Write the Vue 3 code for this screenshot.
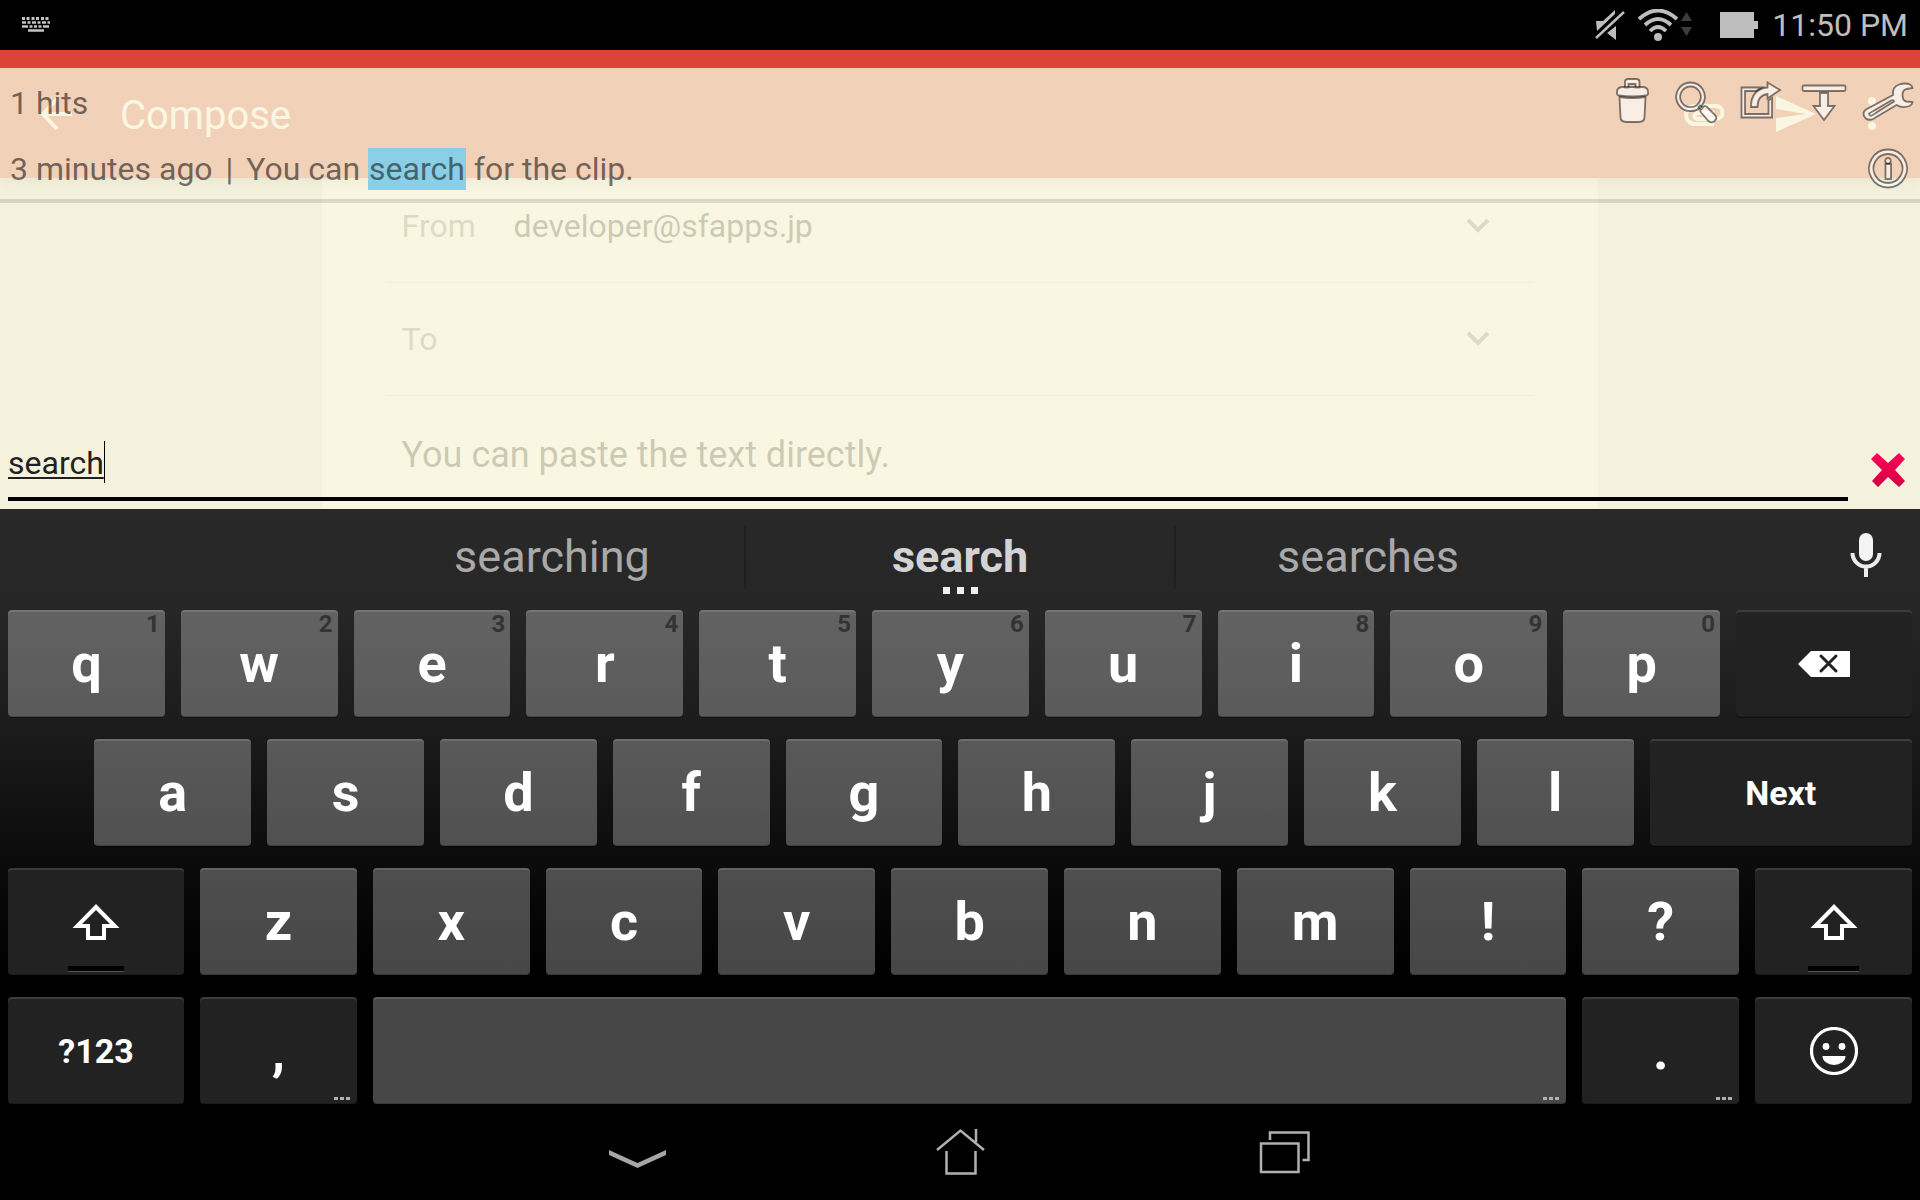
<template>
  <div class="device">
    <header class="status-bar">
      <svg class="status-keyboard" width="30" height="16" viewBox="0 0 30 16" aria-hidden="true">
        <g fill="none" stroke="#c4c4c4">
          <path d="M1 1.5h28" stroke-width="3" stroke-dasharray="3 1.5 3 2" />
          <path d="M1 5.5h28" stroke-width="2.5" stroke-dasharray="4 1.5 3 1.5" />
          <path d="M1 9.5h28" stroke-width="2.5" stroke-dasharray="6 1.5 3 1.5 3 1.5 3 1.5" />
          <path d="M7 13.5h16" stroke-width="2.5" />
        </g>
      </svg>
      <div class="status-icons">
        <svg width="32" height="32" viewBox="0 0 32 32" aria-hidden="true">
          <path d="M2 12h7l12-11v4L3 22z M22 17v14l-9-7z" fill="#bebebe" />
          <path d="M2 29 30 3" stroke="#bebebe" stroke-width="2.5" />
        </svg>
        <svg class="wifi" width="56" height="32" viewBox="0 0 56 32" aria-hidden="true">
          <g fill="none" stroke="#bebebe" stroke-width="3.8">
            <path d="M1 10Q20-7 39 10" />
            <path d="M7 16Q20 4 33 16" />
            <path d="M12 22Q20 14 28 22" />
          </g>
          <circle cx="20" cy="28" r="4" fill="#bebebe" />
          <path d="M43 12h11l-5.5-9z M43 18h11l-5.5 9z" fill="#3d3d3d" />
        </svg>
        <svg class="battery" width="38" height="26" viewBox="0 0 38 26" aria-hidden="true">
          <path d="M0 0h34v9h4v8h-4v9H0z" fill="#bebebe" />
        </svg>
        <time class="clock">11:50 PM</time>
      </div>
    </header>

    <main class="stage">
      <!-- mail app lying underneath the clip panel -->
      <section class="mail">
        <div class="mail-bar">
          <button class="icon-btn" aria-label="Back">
            <svg width="48" height="48" viewBox="0 0 48 48">
              <path d="M40 24H11M25 9 11 24l14 15" fill="none" stroke="#fff" stroke-width="4" />
            </svg>
          </button>
          <h1 class="mail-title">Compose</h1>
          <div class="mail-actions">
            <button class="icon-btn" aria-label="Attach">
              <svg width="48" height="48" viewBox="0 0 48 48">
                <path d="M34 34H15a9 9 0 0 1 0-18h21a6 6 0 0 1 0 13H17.5a3 3 0 0 1 0-6H34" fill="none" stroke="#fff" stroke-width="4" />
              </svg>
            </button>
            <button class="icon-btn" aria-label="Send">
              <svg width="48" height="48" viewBox="0 0 48 48">
                <path d="M4 6v13l30 5-30 4v14l40-18z" fill="#fff" />
              </svg>
            </button>
            <button class="icon-btn" aria-label="More">
              <svg width="16" height="48" viewBox="0 0 16 48">
                <g fill="#fff">
                  <circle cx="8" cy="11" r="4" />
                  <circle cx="8" cy="24" r="4" />
                  <circle cx="8" cy="36" r="4" />
                </g>
              </svg>
            </button>
          </div>
        </div>
        <div class="sheet">
          <div class="field">
            <span id="from-label" class="field-label">From</span>
            <button class="account" aria-labelledby="from-label">
              developer@sfapps.jp
              <svg width="24" height="16" viewBox="0 0 24 16"><path d="M2 2l10 10L22 2" fill="none" stroke="#757575" stroke-width="4" /></svg>
            </button>
          </div>
          <div class="field">
            <label class="field-label" for="to">To</label>
            <input id="to" class="to-input" type="text" />
            <button class="icon-btn" aria-label="Add Cc/Bcc">
              <svg width="24" height="16" viewBox="0 0 24 16"><path d="M2 2l10 10L22 2" fill="none" stroke="#757575" stroke-width="4" /></svg>
            </button>
          </div>
          <textarea v-model="body" class="body-input" rows="1" aria-label="Compose email"></textarea>
        </div>
      </section>

      <!-- translucent clip history panel -->
      <section class="panel">
        <div class="panel-head">
          <p class="hits">{{ clips.length }} hits</p>
          <div class="tools">
            <button v-for="tool in tools" :key="tool.name" class="icon-btn" :aria-label="tool.name">
              <svg class="tool-icon" width="64" height="64" viewBox="0 0 64 64">
                <path v-for="d in tool.paths" :key="d" :d="d" />
              </svg>
            </button>
          </div>
        </div>
        <div v-for="clip in clips" :key="clip.before" class="clip">
          <p class="clip-text">{{ clip.time }}<span class="bar"> | </span>{{ clip.before }}<mark>{{ clip.match }}</mark>{{ clip.after }}</p>
          <button class="icon-btn" aria-label="Clip info">
            <svg class="tool-icon" width="64" height="60" viewBox="0 0 64 60">
              <path d="M32 10.5a19 19 0 1 0 .01 0z M32 15a14.5 14.5 0 1 1-.01 0z" />
              <path d="M32 19a2.8 2.8 0 1 0 .01 0z" />
              <path d="M29.5 25h5.5v15h-5.5z" />
            </svg>
          </button>
        </div>
        <div class="search-row">
          <div class="search-box">
            <input v-model="query" class="search-input" type="text" aria-label="Search clips" />
            <span class="caret"></span>
          </div>
          <button class="icon-btn clear" aria-label="Clear search" @click="query = ''">
            <svg width="36" height="36" viewBox="0 0 36 36">
              <defs>
                <linearGradient id="clear-fill" x1="0" y1="0" x2="0" y2="1">
                  <stop offset="0" stop-color="#ff0059" />
                  <stop offset="1" stop-color="#cf0044" />
                </linearGradient>
              </defs>
              <path d="M7 1l11 10L29 1l6 6-10 11 10 11-6 6-11-10L8 35l-6-6 10-11L1 7z" fill="url(#clear-fill)" />
            </svg>
          </button>
        </div>
      </section>
    </main>

    <section class="keyboard">
      <div class="suggestions">
        <button class="suggestion" @click="query = 'searching'">searching</button>
        <button class="suggestion main" @click="query = 'search'">
          search
          <span class="more-dots"><i></i><i></i><i></i></span>
        </button>
        <button class="suggestion" @click="query = 'searches'">searches</button>
        <button class="icon-btn mic" aria-label="Voice input">
          <svg width="32" height="50" viewBox="0 0 32 50">
            <rect x="9" y="1" width="14" height="28" rx="7" fill="#f4f4f4" />
            <path d="M2.5 21a13.5 13.5 0 0 0 27 0M16 35v10" fill="none" stroke="#ececec" stroke-width="4" />
          </svg>
        </button>
      </div>

      <div v-for="(row, index) in rows" :key="index" class="key-row" :class="{ indented: index === 1 }">
        <button
          v-for="(key, i) in row"
          :key="i"
          class="key"
          :class="[key.size, { dark: key.dark, small: key.small }]"
          :aria-label="key.name || key.label"
          @click="press(key)"
        >
          <span v-if="key.hint" class="hint">{{ key.hint }}</span>
          <svg v-if="key.icon === 'delete'" width="52" height="26" viewBox="0 0 52 26">
            <path d="M0 13 13 0h39v26H13z" fill="#fff" />
            <path d="M23 5l15 15M38 5 23 20" stroke="#222" stroke-width="3" stroke-linecap="round" />
          </svg>
          <svg v-else-if="key.icon === 'shift'" width="48" height="48" viewBox="0 0 48 48">
            <path d="M24 6 47.5 30H34v12H14V30H.5z M24 12 10 26h8v12h12V26h8z" fill="#fff" fill-rule="evenodd" />
          </svg>
          <svg v-else-if="key.icon === 'emoji'" width="48" height="48" viewBox="0 0 48 48">
            <circle cx="24" cy="24" r="22.5" fill="none" stroke="#fff" stroke-width="3.2" />
            <circle cx="16" cy="19.5" r="3.4" fill="#fff" />
            <circle cx="32" cy="19.5" r="3.4" fill="#fff" />
            <path d="M12.5 29h23a11.5 9 0 0 1-23 0z" fill="#fff" />
          </svg>
          <template v-else>{{ key.label }}</template>
          <span v-if="key.icon === 'shift'" class="lock-bar"></span>
          <span v-if="key.more" class="key-dots"><i></i><i></i><i></i></span>
        </button>
      </div>
    </section>

    <nav class="nav-bar">
      <button class="icon-btn" aria-label="Hide keyboard">
        <svg width="64" height="64" viewBox="0 0 64 64">
          <path d="M5 30l28.5 13L62 30v5L33.5 48 5 35z" fill="#a6a6a6" />
        </svg>
      </button>
      <button class="icon-btn" aria-label="Home">
        <svg width="64" height="64" viewBox="0 0 64 64">
          <path d="M9 30 32.5 10.5 56 30M48 9v13M18.5 31v22.5h29V31" fill="none" stroke="#b0b0b0" stroke-width="2.5" />
        </svg>
      </button>
      <button class="icon-btn" aria-label="Recent apps">
        <svg width="64" height="64" viewBox="0 0 64 64">
          <path d="M9 23.5h37.5V52H9z M18 20v-7.5h38.5V40h-6" fill="none" stroke="#b0b0b0" stroke-width="2.5" />
        </svg>
      </button>
    </nav>
  </div>
</template>

<script setup>
import { ref } from 'vue'

const query = ref('search')
const body = ref('You can paste the text directly.')

const clips = [
  { time: '3 minutes ago', before: 'You can ', match: 'search', after: ' for the clip.' }
]

const tools = [
  {
    name: 'Delete',
    paths: [
      'M25 17v-6q0-3 3-3h8.5q3 0 3 3v6h-4v-4h-7v4z',
      'M17 21q0-5 6-5h19q6 0 6 5v2q0 1-2 1.5-14 2-27 0-2-.5-2-1.5z',
      'M19.5 26q13 2 26 0l-1 20q0 5-6 5h-12q-6 0-6-5z'
    ]
  },
  {
    name: 'Search',
    paths: [
      'M26.5 11.5a14.3 14.3 0 1 0 .01 0z M26.5 15.5a10.3 10.3 0 1 1-.01 0z',
      'M36 34.5l2.5 2.5Q40 34 43 36L51 44Q53.500 47 51 49.500 48 53 44.500 50L37 41.500Q35.500 39.500 37 38.500L34.500 36z'
    ]
  },
  {
    name: 'Share',
    paths: [
      'M34 16.5H13.5v30h30.5V27l-3.5 2.500v13.500H17V20H28z',
      'M23 36q0-18 16.5-19.500V11.5l12.5 7.5-12.5 8.5v-4.500Q29.5 24.500 29.5 36z'
    ]
  },
  {
    name: 'Import',
    paths: [
      'M12 14.5h40q1.5 0 1.5 1.5v2.5q0 1.5-1.5 1.5H12q-1.5 0-1.5-1.5V16q0-1.5 1.5-1.5z',
      'M28 22h8v13h6.5L32 49 21.5 35H28z'
    ]
  },
  {
    name: 'Settings',
    paths: [
      'M10 38.5 37 24q-1-8 6-10.5 7-2 11 0 2 1 2.5 3.5l-6 1q-4 1-4 6 0 6 4 6.5l6 .5q-.5 3-3 4-7 2.5-13-1L17 48q-6 2.5-9-3-1.5-4 2-6.5z M13 42.5l22-13q3-1 3 1L16 44.5q-3 1-3-2z'
    ]
  }
]

const letters = (chars, hints = '') =>
  [...chars].map((label, i) => ({ label, hint: hints[i] }))

const rows = [
  [...letters('qwertyuiop', '1234567890'), { icon: 'delete', name: 'Delete', dark: true, size: 'fill' }],
  [...letters('asdfghjkl'), { label: 'Next', dark: true, small: true, size: 'fill' }],
  [
    { icon: 'shift', name: 'Shift', dark: true, size: 'wide' },
    ...letters('zxcvbnm!?'),
    { icon: 'shift', name: 'Shift', dark: true }
  ],
  [
    { label: '?123', dark: true, small: true, size: 'wide' },
    { label: ',', dark: true, more: true },
    { label: ' ', name: 'Space', more: true, size: 'fill' },
    { label: '.', dark: true, more: true },
    { icon: 'emoji', name: 'Emoji', dark: true }
  ]
]

const press = (key) => {
  if (key.icon === 'delete') {
    query.value = query.value.slice(0, -1)
  } else if (key.label && key.label.length === 1) {
    query.value += key.label
  }
}
</script>

<style>
body {
  margin: 0;
  background: #000;
}
</style>

<style scoped>
* {
  box-sizing: border-box;
}

.device {
  display: flex;
  flex-direction: column;
  min-height: 100vh;
  background: #000;
  font-family: Roboto, "Liberation Sans", sans-serif;
  font-size: 32px;
  line-height: 40px;
}

button,
input,
textarea {
  margin: 0;
  padding: 0;
  border: 0;
  outline: 0;
  background: none;
  color: inherit;
  font: inherit;
}

button {
  cursor: pointer;
}

svg {
  display: block;
}

h1,
p {
  margin: 0;
  font-weight: 400;
}

/* status bar */
.status-bar {
  display: flex;
  align-items: center;
  justify-content: space-between;
  height: 50px;
  padding: 0 12px 0 21px;
  color: #bebebe;
}

.status-icons {
  display: flex;
  align-items: center;
}

.wifi {
  margin-left: 12px;
}

.battery {
  margin-left: 26px;
}

.clock {
  margin-left: 14px;
}

/* stage */
.stage {
  position: relative;
  flex: 1;
  display: flex;
  min-height: 440px;
}

.mail {
  flex: 1;
  display: flex;
  flex-direction: column;
  background: #e4e4e6;
}

.mail-bar {
  position: relative;
  display: flex;
  align-items: center;
  height: 128px;
  margin-bottom: -8px;
  padding: 0 40px 0 32px;
  background: #db4437;
  box-shadow: 0 2px 16px rgba(0, 0, 0, 0.3);
  color: #fff;
}

.mail-title {
  margin-left: 40px;
  padding-top: 4px;
  font-size: 40px;
}

.mail-actions {
  display: flex;
  gap: 44px;
  margin-left: auto;
}

.sheet {
  flex: 1;
  width: 66.5%;
  margin: 0 auto;
  padding: 0 64px;
  background: #fff;
  color: #212121;
}

.field {
  display: flex;
  align-items: center;
  height: 113px;
  padding: 0 44px 0 16px;
  border-bottom: 1px solid #dcdcdc;
}

.field-label {
  width: 112px;
  color: #757575;
}

.account {
  flex: 1;
  display: flex;
  align-items: center;
  justify-content: space-between;
  text-align: left;
}

.to-input {
  flex: 1;
  min-width: 0;
}

.body-input {
  display: block;
  width: 100%;
  height: 48px;
  margin-top: 35px;
  padding: 0 16px;
  overflow: hidden;
  resize: none;
  font-size: 36px;
  line-height: 48px;
}

.panel {
  position: absolute;
  top: 18px;
  right: 0;
  bottom: 0;
  left: 0;
  display: flex;
  flex-direction: column;
  background: rgba(247, 245, 218, 0.8);
  color: rgba(0, 0, 0, 0.55);
}

.panel-head {
  display: flex;
  align-items: center;
  justify-content: space-between;
  height: 70px;
  padding-left: 10px;
}

.tools {
  display: flex;
}

.tool-icon {
  fill: rgba(255, 255, 255, 0.6);
  fill-rule: evenodd;
  stroke: rgba(0, 0, 0, 0.5);
  stroke-width: 1.8;
}

.clip {
  display: flex;
  align-items: center;
  justify-content: space-between;
  height: 65px;
  padding-left: 10px;
  border-bottom: 4px solid rgba(0, 0, 0, 0.12);
}

.clip .bar {
  padding: 0 5px;
}

.clip mark {
  padding: 2px 1px;
  background: #8bcfe7;
  color: #45646f;
}

.search-row {
  display: flex;
  align-items: flex-end;
  margin-top: auto;
  padding: 0 14px 8px 8px;
}

.search-box {
  flex: 1;
  display: flex;
  padding-bottom: 12px;
  border-bottom: 4px solid #000;
  color: #212121;
}

.search-input {
  field-sizing: content;
  height: 44px;
  text-decoration: underline;
  text-underline-offset: 3px;
  text-decoration-thickness: 2px;
}

.caret {
  width: 1px;
  height: 42px;
  background: #000;
}

.clear {
  margin: 0 0 13px 22px;
}

/* keyboard */
.keyboard {
  display: flex;
  flex-direction: column;
  gap: 22px;
  background: linear-gradient(#292929 0, #262626 100px, #1a1a1a 230px, #0c0c0c 345px, #000 470px);
  color: #fff;
}

.suggestions {
  display: grid;
  grid-template-columns: 1fr 20% 22.5% 20% 1fr;
  align-items: center;
  height: 79px;
  padding-top: 16px;
}

.suggestion {
  height: 64px;
  color: #a9a9a9;
  font-size: 45px;
  line-height: 64px;
}

.suggestion:first-child {
  grid-column-start: 2;
}

.suggestion.main {
  position: relative;
  border: solid #1f1f1f;
  border-width: 0 2px;
  color: #d3d3d3;
  font-weight: 700;
}

.more-dots {
  position: absolute;
  top: 62px;
  left: 0;
  right: 0;
  display: flex;
  justify-content: center;
  gap: 7px;
}

.more-dots i {
  width: 7px;
  height: 7px;
  background: #efefef;
}

.mic {
  justify-self: end;
  margin-right: 38px;
}

.key-row {
  display: flex;
}

.indented::before {
  content: "";
  width: 4.5%;
}

.key {
  position: relative;
  display: flex;
  align-items: center;
  justify-content: center;
  width: calc(9% - 16px);
  height: 107px;
  margin: 0 8px;
  border-radius: 4px;
  background: rgba(255, 255, 255, 0.28);
  box-shadow: inset 0 2px rgba(255, 255, 255, 0.12), inset 0 -1px rgba(0, 0, 0, 0.2), 0 1px rgba(0, 0, 0, 0.4);
  font-size: 54px;
  font-weight: 700;
  line-height: 64px;
}

.key.dark {
  background: #222;
}

.key.small {
  font-size: 34px;
}

.key.wide {
  width: calc(10% - 16px);
}

.key.fill {
  flex: 1;
}

.hint {
  position: absolute;
  top: 2px;
  right: 5px;
  color: #333;
  font-size: 24px;
  line-height: 24px;
}

.lock-bar {
  position: absolute;
  bottom: 3px;
  width: 32%;
  height: 6px;
  border-bottom: 1px solid #555;
  background: #000;
}

.key-dots {
  position: absolute;
  right: 7px;
  bottom: 4px;
  display: flex;
  gap: 2px;
}

.key-dots i {
  width: 4px;
  height: 3px;
  background: #b0b0b0;
}

/* navigation bar */
.nav-bar {
  display: grid;
  grid-template-columns: repeat(3, 1fr);
  align-items: center;
  justify-items: center;
  width: 100%;
  max-width: 972px;
  height: 96px;
  margin: 0 auto;
}
</style>
